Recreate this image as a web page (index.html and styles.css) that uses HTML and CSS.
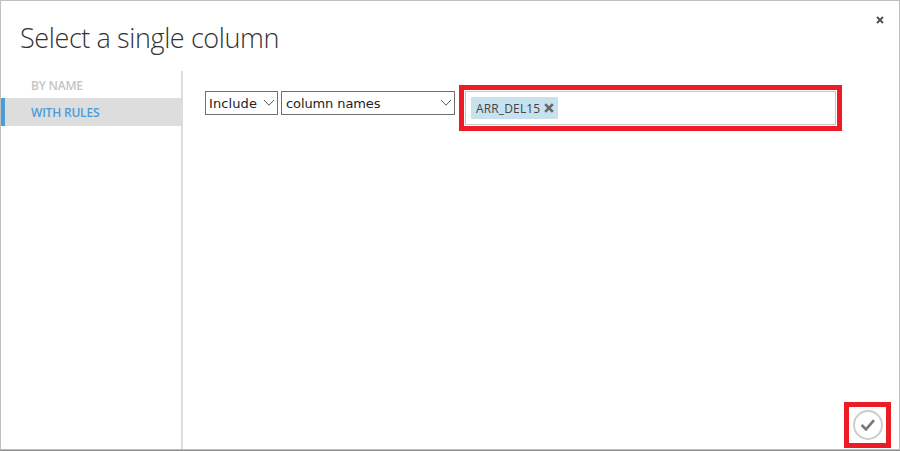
FILE: index.html
```html
<!DOCTYPE html>
<html lang="en">
<head>
<meta charset="utf-8">
<title>Select a single column</title>
<link rel="stylesheet" href="styles.css">
</head>
<body>
<main class="dialog">
  <header class="header">
    <h1 class="title">Select a single column</h1>
    <button class="close" aria-label="Close"><svg width="8" height="8" viewBox="0 0 8 8"><path d="M1 1L7 7M7 1L1 7" stroke="#555" stroke-width="2"/></svg></button>
  </header>
  <div class="body">
    <nav class="tabs">
      <a class="tab"><span class="by-name">BY NAME</span></a>
      <a class="tab active"><span class="with-rules">WITH RULES</span></a>
    </nav>
    <section class="rules">
      <div class="rule">
        <div class="select mode"><span class="mode-text">Include</span><svg width="12" height="8" viewBox="0 0 12 8"><path d="M1 1L6 6.2L11 1" fill="none" stroke="#555" stroke-width="1"/></svg></div>
        <div class="select kind"><span class="kind-text">column names</span><svg width="12" height="8" viewBox="0 0 12 8"><path d="M1 1L6 6.2L11 1" fill="none" stroke="#555" stroke-width="1"/></svg></div>
        <div class="highlight field-highlight">
          <div class="field"><span class="chip"><span class="chip-text">ARR_DEL15</span><svg width="10" height="10" viewBox="0 0 10 10"><path d="M1.2 1.2L8.8 8.8M8.8 1.2L1.2 8.8" stroke="#666" stroke-width="2.6"/></svg></span></div>
        </div>
      </div>
      <div class="highlight ok-highlight">
        <button class="ok" aria-label="OK"><svg width="32" height="32" viewBox="0 0 32 32"><circle cx="16" cy="16" r="14" fill="#fff" stroke="#ccc" stroke-width="2"/><path d="M9.6 16L14 20.4L22 11.2" fill="none" stroke="#777" stroke-width="2.6"/></svg></button>
      </div>
    </section>
  </div>
</main>
</body>
</html>
```
FILE: styles.css
```css
* { box-sizing: border-box; }
body {
  margin: 0;
  height: 451px;
  overflow: hidden;
  background: #8c8c8c;
  font-family: "Open Sans", "Noto Sans", sans-serif;
}
button { padding: 0; border: 0; background: none; }
svg { display: block; flex: none; }
span, h1 { white-space: nowrap; }
.dialog {
  display: flex;
  flex-direction: column;
  height: 450px;
  border: 1px solid #c0c0c0;
  background: #fff;
}
.header {
  display: flex;
  justify-content: space-between;
  align-items: flex-start;
  height: 70px;
  padding: 15px 15px 0 19px;
}
.title {
  margin: 0;
  font-size: 27px;
  line-height: 44px;
  font-weight: 300;
  letter-spacing: -0.4px;
  color: #333;
}
.close { height: 8px; }
.body { display: flex; flex: 1; }
.tabs { width: 182px; border-right: 2px solid #ddd; }
.tab {
  display: flex;
  align-items: center;
  height: 27px;
  padding: 2px 0 0 30px;
  font-size: 12px;
  font-weight: 600;
  color: #c4c4c4;
}
.tab.active {
  height: 28px;
  padding: 0 0 0 26px;
  border-left: 4px solid #4b9cd8;
  background: #ddd;
  color: #4b9cd8;
}
.by-name { letter-spacing: -0.2px; }
.with-rules { letter-spacing: -0.2px; }
.rules {
  display: flex;
  flex: 1;
  flex-direction: column;
  justify-content: space-between;
  padding: 14px 8px 1px 22px;
}
.rule { display: flex; align-items: flex-start; }
.select {
  display: flex;
  justify-content: space-between;
  align-items: center;
  height: 24px;
  margin-top: 6px;
  padding: 0 2px 0 3px;
  border: 1px solid #707070;
  font-family: "DejaVu Sans", sans-serif;
  font-size: 13px;
  color: #222;
}
.mode { width: 73px; }
.mode-text { letter-spacing: 0.1px; }
.kind { width: 174px; margin-left: 3px; padding-left: 4px; }
.kind-text { letter-spacing: -0.1px; }
.highlight { border: 5px solid #ed1c24; }
.field-highlight { width: 383px; height: 46px; margin-left: 4px; padding: 1px; }
.field { height: 34px; padding: 5px; border: 1px solid #c4c7c9; }
.chip {
  display: flex;
  align-items: center;
  justify-content: space-between;
  width: 87px;
  height: 22px;
  padding: 0 4px 0 5px;
  background: #c7e1ef;
  font-size: 12px;
  color: #444;
}
.chip-text { letter-spacing: 0.15px; }
.ok-highlight { align-self: flex-end; width: 47px; height: 46px; padding: 2px 0 0 3px; }
.ok { display: block; }
```
